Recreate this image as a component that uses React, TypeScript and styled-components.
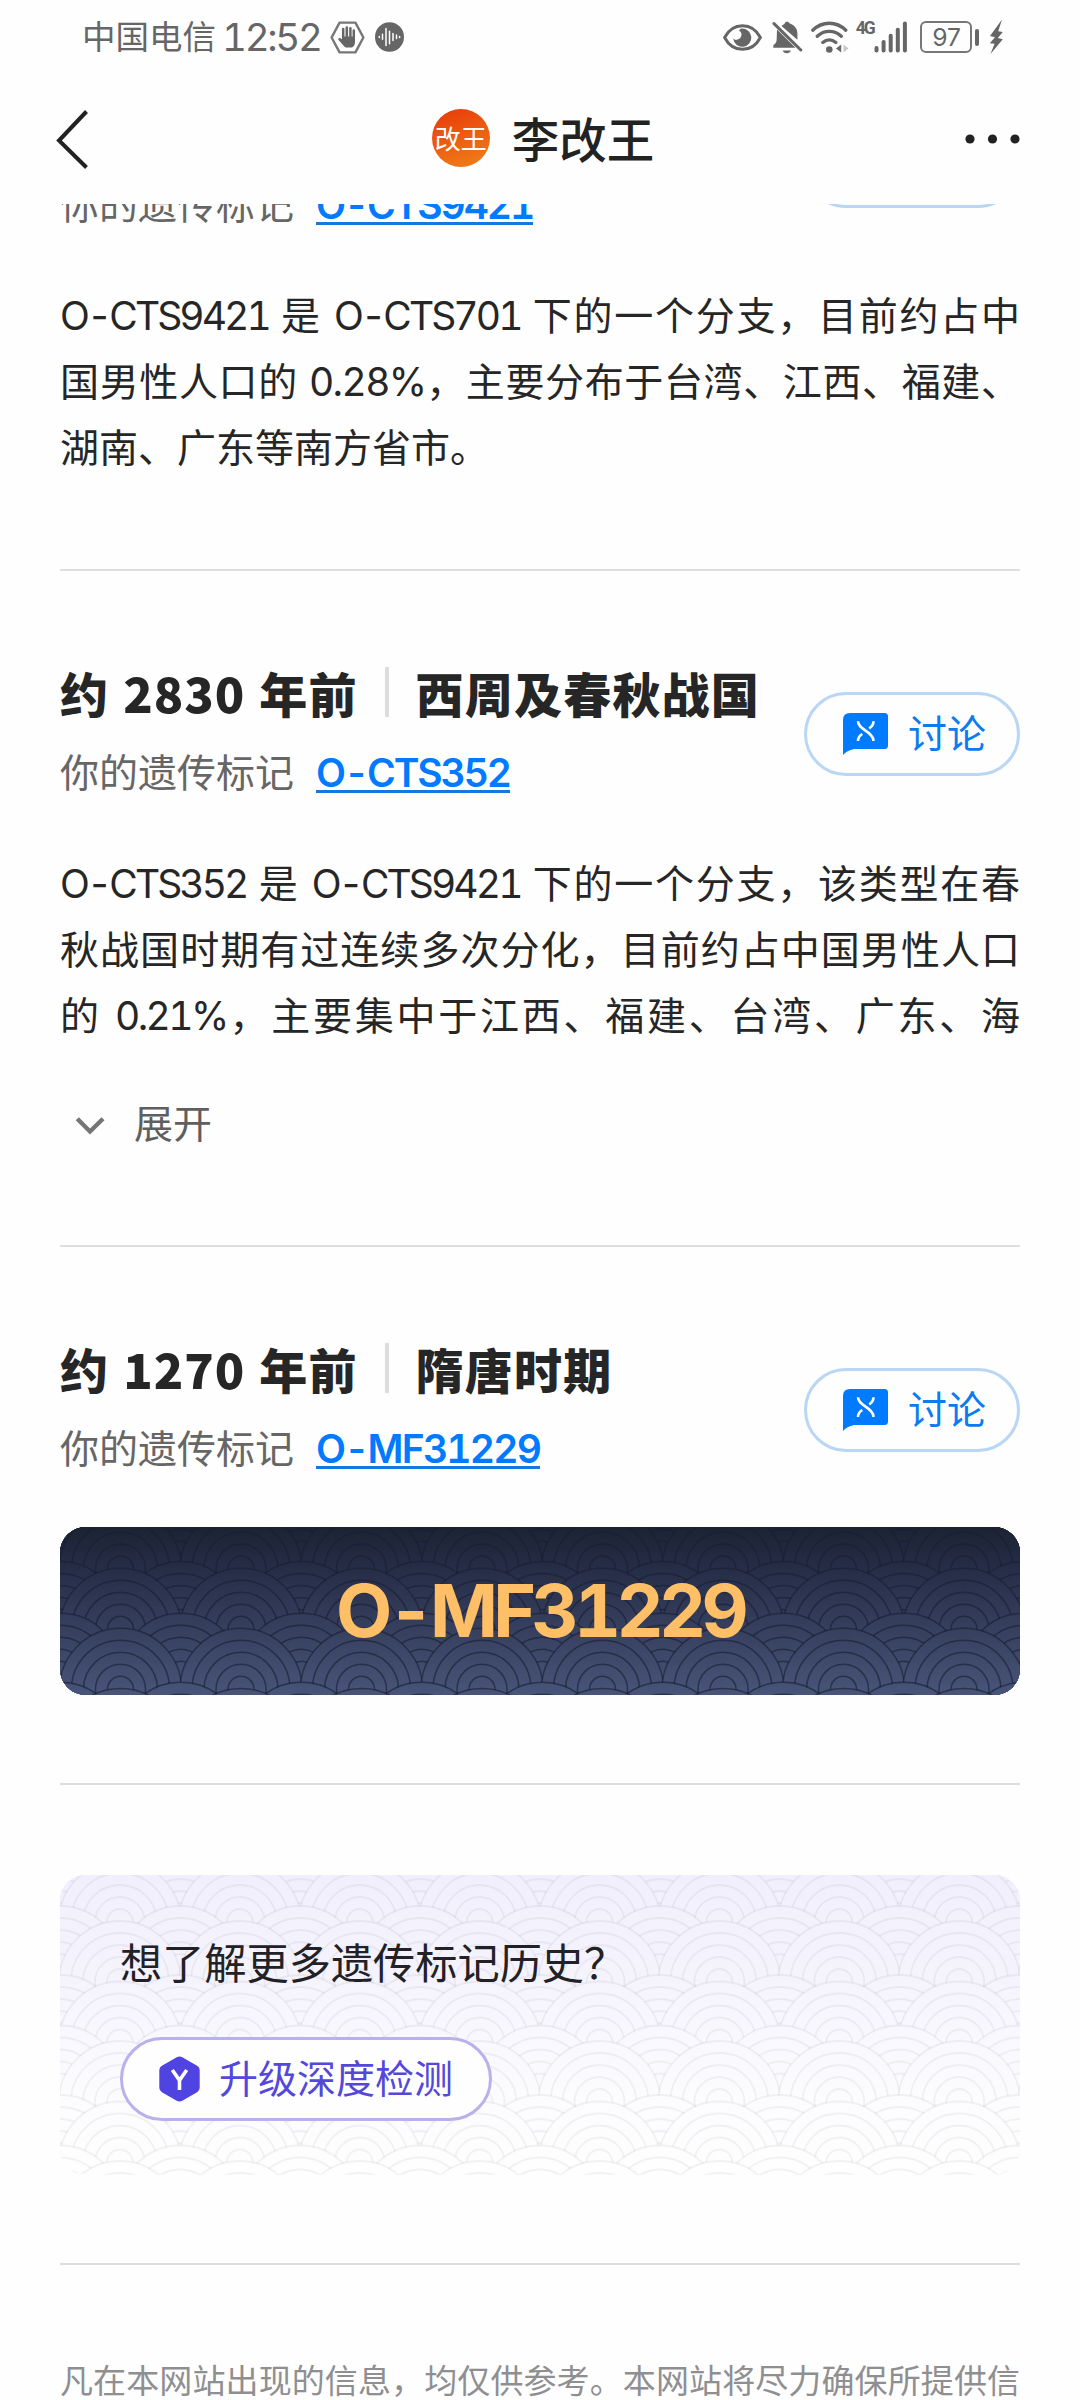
import React from 'react';
import styled, { createGlobalStyle } from 'styled-components';

const cjk = `'Noto Sans CJK SC', sans-serif`;
const latin = `Inter, 'Noto Sans CJK SC', sans-serif`;

const Global = createGlobalStyle`
  html, body { margin: 0; padding: 0; background: #fefefe; }
  * { box-sizing: border-box; font-feature-settings: 'tnum' 1 !important; }
`;

const Screen = styled.div`
  width: 1080px;
  height: 2400px;
  overflow: hidden;
  display: flex;
  flex-direction: column;
  background: #fefefe;
  color: #262626;
  font-family: ${latin};
`;

/* ---------- status bar ---------- */
const StatusBar = styled.header`
  flex: none;
  height: 74px;
  padding: 0 77px 0 82px;
  display: flex;
  justify-content: space-between;
  align-items: center;
  color: #666;
  svg { display: block; flex: none; }
`;
const StatusGroup = styled.div`
  display: flex;
  align-items: center;
`;
const Carrier = styled.span`
  font: 400 33.5px/40px ${latin};
  margin-right: 6px;
`;
const Clock = styled.span`
  width: 101px;
  font: 400 38.5px/40px ${latin};
  letter-spacing: -2.3px;
  margin-right: 7px;
`;
const Spaced = styled.span<{ $left: number }>`
  margin-left: ${(p) => p.$left}px;
`;
const Network = styled.span`
  display: flex;
  align-items: flex-start;
  height: 32px;
  margin-left: 6px;
  font: 700 17.5px/15px Roboto, sans-serif;
  letter-spacing: -1.8px;
  color: #666;
`;
const Battery = styled.span`
  width: 52px;
  height: 32px;
  margin-left: 12px;
  border: 2.5px solid #777;
  border-radius: 6px;
  display: flex;
  align-items: center;
  justify-content: center;
  font: 400 24.5px/28px ${latin};
  letter-spacing: -2px;
`;
const BatteryNub = styled.span`
  width: 4px;
  height: 17px;
  margin-left: 3px;
  border-radius: 2px;
  background: #666;
`;

/* ---------- navigation ---------- */
const NavBar = styled.nav`
  flex: none;
  height: 130px;
  padding: 0 60px 0 54px;
  display: grid;
  grid-template-columns: 1fr auto 1fr;
  align-items: center;
  svg { display: block; }
`;
const Profile = styled.div`
  display: flex;
  align-items: center;
  gap: 22px;
  margin-left: 12px;
`;
const Avatar = styled.div`
  width: 58px;
  height: 58px;
  margin-bottom: 2px;
  border-radius: 50%;
  display: flex;
  align-items: center;
  justify-content: center;
  background: linear-gradient(160deg, #e8400a 10%, #f07a18 90%);
  color: #fff;
  font: 400 26px/30px ${latin};
  padding-top: 4px;
  white-space: nowrap;
`;
const Name = styled.h1`
  margin: 4px 0 0;
  font: 500 47.5px/60px ${latin};
  color: #222;
`;
const More = styled.div`
  justify-self: end;
`;

/* ---------- content ---------- */
const Viewport = styled.main`
  flex: 1;
  min-height: 0;
  overflow: hidden;
`;
const Feed = styled.div`
  margin-top: -201px;
  padding: 0 60px;
`;
const Section = styled.section<{ $top?: number }>`
  padding: ${(p) => p.$top ?? 88}px 0 88px;
  border-bottom: 2px solid #dedede;
`;
const Head = styled.div`
  height: 147px;
  display: flex;
  justify-content: space-between;
  align-items: center;
`;
const Titles = styled.div`
  height: 147px;
  display: flex;
  flex-direction: column;
  justify-content: flex-end;
  gap: 12px;
`;
const Era = styled.h2`
  margin: 0;
  height: 72px;
  display: flex;
  align-items: center;
  font: 900 48px/72px ${cjk};
  letter-spacing: 1.2px;
  white-space: nowrap;
`;
const Years = styled.span`
  width: 122px;
  font-size: 48.5px;
  letter-spacing: 1px;
  margin: 0 14px 0 14px;
`;
const EraBar = styled.i`
  width: 4px;
  height: 50px;
  margin: 0 27px 0 27px;
  background: #dcdcdc;
`;
const Marker = styled.div`
  height: 66px;
  display: flex;
  align-items: center;
  gap: 23px;
  font: 400 39px/66px ${latin};
  color: #666;
`;
const MarkerLink = styled.a<{ $track?: number }>`
  font-weight: 600;
  line-height: 34px;
  letter-spacing: ${(p) => p.$track ?? -2.1}px;
  color: #007aff;
  border-bottom: 3px solid #1478e0;
  margin-top: 2px;
  margin-left: -1px;
`;
const Pill = styled.button<{ $w: number; $color: string; $border: string }>`
  width: ${(p) => p.$w}px;
  height: 84px;
  padding: 0 0 0 36px;
  margin-top: 2px;
  display: flex;
  align-items: center;
  border: 3px solid ${(p) => p.$border};
  border-radius: 42px;
  background: #fefefe;
  color: ${(p) => p.$color};
  font: 400 39px/60px ${latin};
  svg { display: block; flex: none; margin-right: 20px; }
`;
const Body = styled.p`
  margin: 45px 0 0;
  font: 400 39px/66px ${latin};
`;
const Line = styled.span<{ $last?: boolean }>`
  display: block;
  text-align: justify;
  text-align-last: ${(p) => (p.$last ? 'left' : 'justify')};
  white-space: nowrap;
`;
const Latin = styled.span<{ $track?: number }>`
  letter-spacing: ${(p) => p.$track ?? -2.9}px;
`;
const Expand = styled.div`
  margin-top: 42px;
  height: 66px;
  padding-left: 15px;
  display: flex;
  align-items: center;
  gap: 28px;
  font: 400 39px/66px ${latin};
  color: #5f5f5f;
  svg { margin-top: 3px; }
`;
const Banner = styled.div`
  position: relative;
  height: 168px;
  margin-top: 45px;
  border-radius: 26px;
  overflow: hidden;
  display: flex;
  align-items: center;
  justify-content: center;
`;
const Backdrop = styled.svg`
  position: absolute;
  inset: 0;
  display: block;
`;
const BannerText = styled.span`
  position: relative;
  font: 700 73px/90px ${latin};
  letter-spacing: -4.7px;
  color: #ffbf66;
`;
const Promo = styled.div`
  position: relative;
  height: 300px;
  padding: 56px 60px 0;
  border-radius: 26px;
  overflow: hidden;
`;
const PromoTitle = styled.h3`
  position: relative;
  margin: 0 0 40px;
  font: 400 42.2px/66px ${latin};
  color: #222126;
`;
const PromoAction = styled.div`
  position: relative;
  svg { margin-right: 19px; }
`;
const Disclaimer = styled.footer`
  padding-top: 98px;
  font: 400 33px/36px ${latin};
  color: #8f8f92;
`;

/* ---------- icons ---------- */
const HandHexIcon = () => (
  <svg width="35" height="33" viewBox="0 0 35 33" fill="none">
    <path d="M9.6 1.6h15.8L33.4 16.5l-8 14.9H9.6L1.6 16.5z" stroke="#777" strokeWidth="2.4" strokeLinejoin="round" />
    <path d="M13.2 8v9M16.8 6.6v10M20.4 7.2v10M23.8 9.6v9" stroke="#666" strokeWidth="2.5" strokeLinecap="round" />
    <path d="M12 15.5h13v5.5c0 3.4-1.8 5.6-4.6 5.6h-3.2c-1.8 0-2.9-.9-4-2.3l-4.6-5.4c-.9-1.2.6-2.5 1.8-1.7l1.6 1.1z" fill="#666" />
  </svg>
);
const WaveIcon = () => (
  <svg width="29" height="30" viewBox="0 0 29 30">
    <ellipse cx="14.5" cy="15" rx="14.5" ry="14.8" fill="#666" />
    <path d="M4.3 14.6v.8M7.5 12.3v5M11 6.5v17M14.5 9.3v12.5M18 11.5v7M21.5 13v3.5M24.6 14.6v.8" stroke="#fff" strokeWidth="1.5" strokeLinecap="round" />
  </svg>
);
const EyeIcon = () => (
  <svg width="39" height="27" viewBox="0 0 39 27" fill="none">
    <path d="M1.6 13.5C5.5 6 12 1.7 19.5 1.7S33.5 6 37.4 13.5C33.5 21 27 25.3 19.5 25.3S5.5 21 1.6 13.5z" stroke="#666" strokeWidth="3" strokeLinejoin="round" />
    <path d="M18.5 4.6a9.1 9.1 0 1 1-8.3 10c1 1 2.3 1.5 3.7 1.2 2.8-.4 4.6-2.6 4.6-5.2 0-1.9-.8-3.1-2.2-3.7 0-1 .9-2 2.2-2.3z" fill="#666" />
  </svg>
);
const BellOffIcon = () => (
  <svg width="31" height="33" viewBox="0 0 31 33">
    <path d="M9.5 5C11 3.5 12.5 3.2 12.8 2.2c.5-2 4-2 4.6 0 4.5 1.4 8 5.2 8 10v6.6z" fill="#666" />
    <path d="M5 8.5 23.5 26.8H1.3v-2.6c2.6-1.5 3.4-3.6 3.4-6.4z" fill="#666" />
    <path d="M10.8 29.5h8c-.6 3.6-7.4 3.6-8 0z" fill="#666" />
    <path d="M2 2.6 28.8 29" stroke="#666" strokeWidth="3" strokeLinecap="round" />
  </svg>
);
const WifiIcon = () => (
  <svg width="39" height="33" viewBox="0 0 39 33" fill="none">
    <path d="M1.8 9.2c9.5-9.3 23.5-9.3 33 0M6.3 15.3c7-6.5 17-6.5 24 0M11.8 21.4c4-3.3 9-3.3 13 0" stroke="#666" strokeWidth="3.3" strokeLinecap="round" />
    <circle cx="18.3" cy="28.5" r="3.3" fill="#666" />
    <path d="M30.2 23.5v8l-5.2-4z" fill="#666" />
    <path d="M32.5 23.5v8l5-4z" fill="#c8c8c8" />
  </svg>
);
const SignalIcon = () => (
  <svg width="34" height="32" viewBox="0 0 34 32">
    {[0, 1, 2, 3, 4].map((i) => (
      <rect key={i} x={0.5 + i * 7.1} y={25 - i * 6.1} width="4" height={6.5 + i * 6.1} rx="1.9" fill="#666" />
    ))}
  </svg>
);
const BoltIcon = () => (
  <svg width="14" height="36" viewBox="0 0 14 36">
    <path d="M13 .5 1 17l5 1.2L.8 24.2l4.8.6L1.5 35 13.8 20.2l-5-1.2L13.8 13l-4.6-.8z" fill="#666" />
  </svg>
);
const BackIcon = () => (
  <svg width="36" height="62" viewBox="0 0 36 62" fill="none">
    <path d="M32.5 3.5 5 32.5l27.5 27" stroke="#222" strokeWidth="4" />
  </svg>
);
const DotsIcon = () => (
  <svg width="55" height="10" viewBox="0 0 55 10" fill="#222">
    <circle cx="5" cy="5" r="4.6" />
    <circle cx="27.5" cy="5" r="4.6" />
    <circle cx="50" cy="5" r="4.6" />
  </svg>
);
const ChatIcon = () => (
  <svg width="45" height="42" viewBox="0 0 45 42" fill="none">
    <path d="M7 0h34.5Q45 0 45 3.5V32.5Q45 36 41.5 36H13.5C7.5 36 3.5 38.5 0 42V7Q0 0 7 0z" fill="#007bff" />
    <path d="M15 8.3c0 8.7 15.5 10.2 15.5 19.7M30.5 8.3c0 3.5-1.8 5.5-4.3 7M15 28c0-3.5 1.8-5.5 4.3-7" stroke="#fff" strokeWidth="2.6" />
  </svg>
);
const ChevronIcon = () => (
  <svg width="31" height="20" viewBox="0 0 31 20" fill="none">
    <path d="M2.3 2.8 15 15.5 28 2.8" stroke="#757575" strokeWidth="4.4" />
  </svg>
);
const HexYIcon = () => (
  <svg width="41" height="46" viewBox="0 0 41 46" fill="none">
    <path d="M17.7 1.2q2.8-1.5 5.6 0l14.8 8.6q2.6 1.5 2.6 4.4v17.6q0 2.9-2.6 4.4l-14.8 8.6q-2.8 1.5-5.6 0L2.9 36.2Q.3 34.7.3 31.8V14.2q0-2.9 2.6-4.4z" fill="#4f43e2" />
    <path d="M13.3 14 20.5 24.3 27.7 14M20.5 23.5V34" stroke="#fff" strokeWidth="3.6" />
  </svg>
);

/* ---------- seigaiha wave pattern ---------- */
const RINGS = [61, 49, 37, 25, 13];

type WavesProps = {
  id: string;
  height: number;
  pitch: number;
  rows: { top: number; shifted: boolean }[];
  stops: [number, string][];
  line: string;
  weight: number;
};

const Waves = ({ id, height, pitch, rows, stops, line, weight }: WavesProps) => (
  <Backdrop width={960} height={height} viewBox={`0 0 960 ${height}`}>
    <defs>
      <linearGradient id={id} gradientUnits="userSpaceOnUse" x1="0" y1="0" x2="0" y2={height}>
        {stops.map(([at, color]) => (
          <stop key={at} offset={at} stopColor={color} />
        ))}
      </linearGradient>
    </defs>
    <rect width="960" height={height} fill={`url(#${id})`} />
    {rows.map(({ top, shifted }) =>
      Array.from({ length: 10 }, (_, i) => {
        const cx = (shifted ? 0.3 : -60) + i * pitch;
        return RINGS.map((r) => (
          <circle key={`${top}-${i}-${r}`} cx={cx} cy={top + 61} r={r} fill={`url(#${id})`} stroke={line} strokeWidth={weight} />
        ));
      }),
    )}
  </Backdrop>
);

const row = (top: number, shifted = false) => ({ top, shifted });
const darkRows = [row(-86, true), row(-79), row(-34, true), row(-19), row(34.5, true), row(41.3), row(86.3, true), row(101.3), row(155.3, true), row(161.5)];
const lightRows = [row(-89, true), row(-74), row(-20, true), row(-14), row(31, true), row(46), row(100, true), row(106.5), row(150.5, true), row(166), row(220, true), row(226.5), row(270.5, true), row(286)];

const Discuss = () => (
  <Pill $w={216} $color="#0b7cf0" $border="#b9d6f5">
    <ChatIcon />讨论
  </Pill>
);

export default function App() {
  return (
    <Screen>
      <Global />
      <StatusBar>
        <StatusGroup>
          <Carrier>中国电信</Carrier>
          <Clock>12:52</Clock>
          <HandHexIcon />
          <Spaced $left={10}><WaveIcon /></Spaced>
        </StatusGroup>
        <StatusGroup>
          <EyeIcon />
          <Spaced $left={10}><BellOffIcon /></Spaced>
          <Spaced $left={8}><WifiIcon /></Spaced>
          <Network>4G</Network>
          <SignalIcon />
          <Battery>97</Battery>
          <BatteryNub />
          <Spaced $left={10}><BoltIcon /></Spaced>
        </StatusGroup>
      </StatusBar>
      <NavBar>
        <BackIcon />
        <Profile>
          <Avatar>改王</Avatar>
          <Name>李改王</Name>
        </Profile>
        <More><DotsIcon /></More>
      </NavBar>
      <Viewport>
        <Feed>
          <Section>
            <Head>
              <Titles>
                <Marker>你的遗传标记<MarkerLink>O-CTS9421</MarkerLink></Marker>
              </Titles>
              <Pill $w={216} $color="#0b7cf0" $border="#b9d6f5" />
            </Head>
            <Body>
              <Line><Latin>O-CTS9421</Latin> 是 <Latin>O-CTS701</Latin> 下的一个分支，目前约占中</Line>
              <Line>国男性人口的 <Latin $track={-1.6}>0.28%</Latin>，主要分布于台湾、江西、福建、</Line>
              <Line $last>湖南、广东等南方省市。</Line>
            </Body>
          </Section>
          <Section>
            <Head>
              <Titles>
                <Era>约<Years>2830</Years>年前<EraBar />西周及春秋战国</Era>
                <Marker>你的遗传标记<MarkerLink>O-CTS352</MarkerLink></Marker>
              </Titles>
              <Discuss />
            </Head>
            <Body>
              <Line><Latin>O-CTS352</Latin> 是 <Latin>O-CTS9421</Latin> 下的一个分支，该类型在春</Line>
              <Line>秋战国时期有过连续多次分化，目前约占中国男性人口</Line>
              <Line>的 <Latin $track={-2.6}>0.21%</Latin>，主要集中于江西、福建、台湾、广东、海</Line>
            </Body>
            <Expand><ChevronIcon />展开</Expand>
          </Section>
          <Section>
            <Head>
              <Titles>
                <Era>约<Years>1270</Years>年前<EraBar />隋唐时期</Era>
                <Marker>你的遗传标记<MarkerLink $track={-1.8}>O-MF31229</MarkerLink></Marker>
              </Titles>
              <Discuss />
            </Head>
            <Banner>
              <Waves
                id="night"
                height={168}
                pitch={120.5}
                rows={darkRows}
                stops={[[0, '#1b2333'], [0.25, '#262d47'], [0.6, '#363f5d'], [1, '#485479']]}
                line="rgba(24,31,52,0.62)"
                weight={1.5}
              />
              <BannerText>O-MF31229</BannerText>
            </Banner>
          </Section>
          <Section $top={90}>
            <Promo>
              <Waves
                id="dawn"
                height={300}
                pitch={119.9}
                rows={lightRows}
                stops={[[0, '#f1effc'], [0.35, '#f5f4fd'], [0.75, '#fcfcfe'], [1, '#fefefe']]}
                line="rgba(70,70,90,0.065)"
                weight={1.8}
              />
              <PromoTitle>想了解更多遗传标记历史？</PromoTitle>
              <PromoAction>
                <Pill $w={372} $color="#5347dc" $border="#b8b1ec">
                  <HexYIcon />升级深度检测
                </Pill>
              </PromoAction>
            </Promo>
          </Section>
          <Disclaimer>
            <Line>凡在本网站出现的信息，均仅供参考。本网站将尽力确保所提供信</Line>
          </Disclaimer>
        </Feed>
      </Viewport>
    </Screen>
  );
}
